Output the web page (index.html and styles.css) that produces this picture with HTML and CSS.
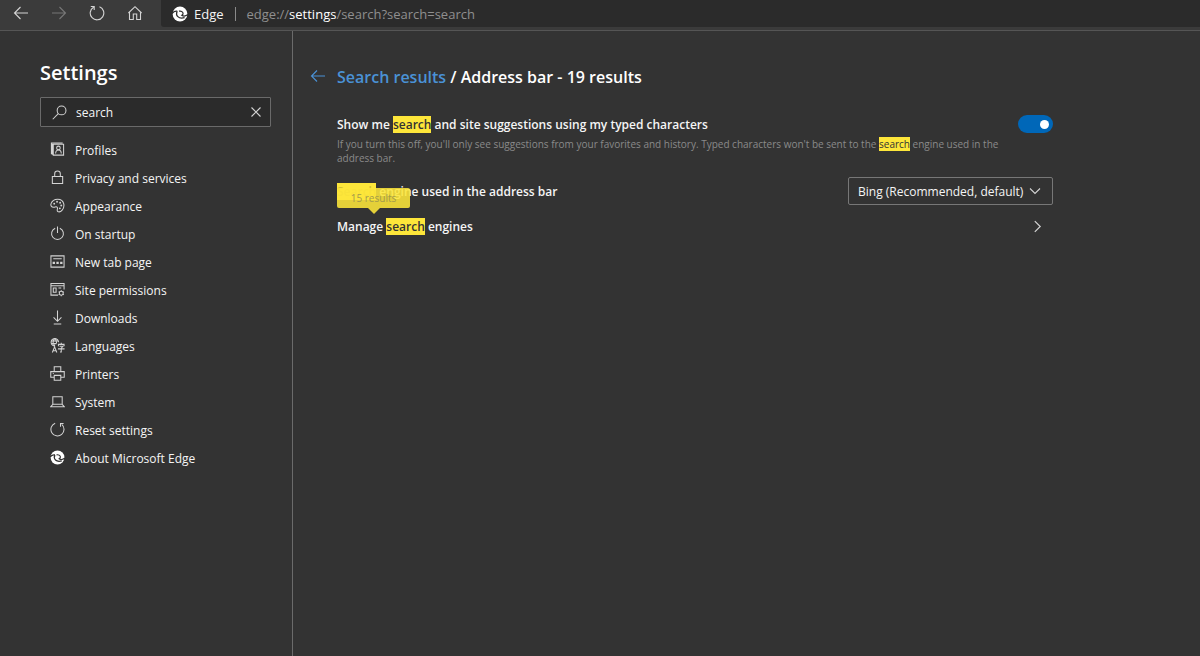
FILE: index.html
```html
<!DOCTYPE html>
<html lang="en">
<head>
<meta charset="utf-8">
<meta name="viewport" content="width=device-width, initial-scale=1">
<title>Settings</title>
<link rel="stylesheet" href="styles.css">
</head>
<body>
<svg class="defs" aria-hidden="true">
  <symbol id="edge" viewBox="0 0 16 16">
    <circle cx="8" cy="8" r="7.400" fill="#fff" stroke="none"/>
    <path d="M0 7.500C1.500 5.600 3.200 4.800 5.200 5.200" fill="none" stroke="#2e2e2e" stroke-width="1.300"/>
    <path d="M5.200 5.200C3.200 9.500 6.500 13.300 12.600 11.600" fill="none" stroke="#2e2e2e" stroke-width="1.300"/>
    <path d="M7 5.200C10.800 4.500 12.300 8 9.800 9.300C11.600 10.600 14 10 16 8.600" fill="none" stroke="#2e2e2e" stroke-width="1.200"/>
  </symbol>
</svg>
<header class="toolbar">
  <nav class="browser-nav" aria-label="Browser">
    <button class="tool" aria-label="Back"><svg viewBox="0 0 16 16"><path d="M15 8H1.500M7.500 2L1.500 8l6 6"/></svg></button>
    <button class="tool dim" aria-label="Forward"><svg viewBox="0 0 16 16"><path d="M1 8h13.500M8.500 2l6 6-6 6"/></svg></button>
    <button class="tool" aria-label="Refresh"><svg viewBox="0 0 16 16"><path d="M10.500 1.700A6.800 6.800 0 1 1 4.500 2.200M1.800 1.500h3.400v3.500"/></svg></button>
    <button class="tool" aria-label="Home"><svg viewBox="0 0 16 16"><path d="M2.500 7v7.500h3.800V9h3.400v5.500h3.800V7M1.400 8L8 1.700 14.600 8"/></svg></button>
  </nav>
  <div class="address">
    <svg class="edge-icon" aria-hidden="true"><use href="#edge"/></svg>
    <span class="app">Edge</span>
    <span class="sep"></span>
    <span class="url">edge://<b>settings</b>/search?search=search</span>
  </div>
</header>
<div class="layout">
  <aside class="sidebar">
    <h1>Settings</h1>
    <div class="search-box">
      <svg viewBox="0 0 16 16" aria-hidden="true"><circle cx="10.200" cy="5.800" r="4.700"/><path d="M6.700 9.300L.8 15.200"/></svg>
      <input type="text" value="search" aria-label="Search settings">
      <button class="clear" aria-label="Clear search"><svg viewBox="0 0 10 10"><path d="M.5.5l9 9M9.500.5l-9 9"/></svg></button>
    </div>
    <nav class="menu" aria-label="Settings">
      <a href="#profiles"><svg viewBox="0 0 16 16"><path d="M3.500 2.500h11v11.500h-11zM1.500 13V1h12M2.500 13.500V1.800"/><circle cx="9" cy="6.300" r="1.900"/><path d="M6 12.200c0-5 6-5 6 0"/></svg>Profiles</a>
      <a href="#privacy"><svg viewBox="0 0 16 16"><path d="M2.500 7h11v7.500h-11zM5 7V4a3 3 0 0 1 6 0v3"/></svg>Privacy and services</a>
      <a href="#appearance"><svg viewBox="0 0 16 16"><path d="M1.200 5.800C3.500-.2 13-.5 14.700 6.200c1 5.200-3.400 9.800-6.400 8.200-1.600-1 .2-2.700-.4-4.100-.8-1.800-2.300-.5-3.800-.5C1.500 9.900.3 8 1.200 5.800z"/><g class="solid"><circle cx="4.500" cy="6" r="1"/><circle cx="7.500" cy="4" r="1"/><circle cx="10.800" cy="5" r="1"/><circle cx="12" cy="8" r="1"/><circle cx="10.500" cy="11" r="1"/></g></svg>Appearance</a>
      <a href="#startup"><svg viewBox="0 0 16 16"><path d="M5.500 2.400a6.300 6.300 0 1 0 5 0M8 .5v7"/></svg>On startup</a>
      <a href="#newtab"><svg viewBox="0 0 16 16"><path d="M1 2h14v12H1zM3.500 5h9"/><path class="solid" d="M2.800 8.200h2.500v2.500H2.800zM6.800 8.200h2.500v2.500H6.800zM10.800 8.200h2.500v2.500h-2.500z"/></svg>New tab page</a>
      <a href="#permissions"><svg viewBox="0 0 16 16"><path d="M8.500 14H1V1.500h14V8M1 4h14M3.500 6.500h3v4.500h-3zM9 6.500h3"/><circle cx="12" cy="12" r="2.100"/><path d="M12 8.800v1.100M12 14.100v1.100M9.200 10.400l1 .6M13.900 13l.9.600M9.200 13.600l1-.6M13.900 11l.9-.6"/></svg>Site permissions</a>
      <a href="#downloads"><svg viewBox="0 0 16 16"><path d="M8 .5V12M3.800 7.800L8 12l4.200-4.200M4 15h8"/></svg>Downloads</a>
      <a href="#languages"><svg viewBox="0 0 16 16"><path d="M5.500 8.500A4 4 0 1 1 9.200 4.500M1 3.300h8M1 6h6M5.200.5c-2.400 2.500-2.400 5.500 0 8M5.200.5c1.400 1.500 1.900 3 1.800 5M2.500 15.500l2.400-6 2.400 6M3.300 13.500h3.200M12 5v1.800M9 8.800V6.800h6v2M10.200 8.900h3.600L12 10.800v4.200h-1.300M8.500 11.600h7"/></svg>Languages</a>
      <a href="#printers"><svg viewBox="0 0 16 16"><path d="M4.500 6V.8h7V6M4 12H.8V6h14.400v6H12M4.500 10h7v5.200h-7zM3 8h1"/></svg>Printers</a>
      <a href="#system"><svg viewBox="0 0 16 16"><path d="M3 3h10v8H3zM3 11L.8 13.500h14.400L13 11"/></svg>System</a>
      <a href="#reset"><svg viewBox="0 0 16 16"><path d="M5.500 1.300A7 7 0 1 0 12.500 2.500M14.500 1.700h-3.300v3.400"/></svg>Reset settings</a>
      <a href="#about"><svg><use href="#edge"/></svg>About Microsoft Edge</a>
    </nav>
  </aside>
  <main class="results">
    <div class="heading">
      <a class="back" href="#back" aria-label="Back to search results"><svg viewBox="0 0 16 16"><path d="M15 8H1.500M7 2.500L1.500 8 7 13.500"/></svg></a>
      <h2><a href="#results">Search results</a> / Address bar - 19 results</h2>
    </div>
    <section class="settings">
      <div class="row suggestions">
        <div class="copy">
          <label for="suggest">Show me <mark>search</mark> and site suggestions using my typed characters</label>
          <p>If you turn this off, you'll only see suggestions from your favorites and history. Typed characters won't be sent to the <mark>search</mark> engine used in the address bar.</p>
        </div>
        <input class="toggle" id="suggest" type="checkbox" role="switch" checked>
      </div>
      <div class="row engine">
        <label for="engine"><mark class="covered">Search</mark> engine used in the address bar<span class="bubble">15 results</span></label>
        <div class="select">
          <select id="engine"><option>Bing (Recommended, default)</option></select>
          <svg viewBox="0 0 12 12" aria-hidden="true"><path d="M1 3.500l5 5 5-5"/></svg>
        </div>
      </div>
      <a class="row manage" href="#manage"><span>Manage <mark>search</mark> engines</span><svg viewBox="0 0 12 12" aria-hidden="true"><path d="M3.500 1l5 5-5 5"/></svg></a>
    </section>
  </main>
</div>
</body>
</html>
```
FILE: styles.css
```css
* { box-sizing: border-box; }
body {
  margin: 0;
  min-height: 100vh;
  display: flex;
  flex-direction: column;
  background: #333;
  color: #f5f5f5;
  font: 12px/16px "Open Sans", "Noto Sans", sans-serif;
}
button, input, select { font: inherit; color: inherit; margin: 0; }
button { padding: 0; border: 0; background: none; }
a { color: inherit; text-decoration: none; }
svg { display: block; flex: none; fill: none; stroke: #d4d4d4; stroke-width: 1.1; }
.defs { position: absolute; width: 0; height: 0; }
.solid { fill: #d4d4d4; stroke: none; }

.toolbar {
  display: flex;
  height: 31px;
  background: #3b3b3b;
  border-bottom: 1px solid #555;
}
.browser-nav { display: flex; width: 161px; padding: 5px 0 0 13px; gap: 22px; }
.tool { width: 16px; height: 16px; }
.tool svg { width: 16px; height: 16px; }
.dim svg { stroke: #777; }
.address {
  flex: 1;
  height: 27px;
  display: flex;
  align-items: center;
  padding: 0 0 0 11px;
  background: #2b2b2b;
  border-radius: 0 0 0 3px;
  font-size: 13px;
}
.edge-icon { width: 16px; height: 16px; }
.app { margin-left: 6px; }
.sep { width: 1px; height: 14px; margin: 0 11px; background: #8a8a8a; }
.url { color: #8f8f8f; }
.url b { color: #fff; font-weight: 400; }

.layout { flex: 1; display: flex; }
.sidebar {
  width: 293px;
  padding: 28px 21px 0 40px;
  border-right: 1px solid #6b6b6b;
}
h1 { margin: 0 0 10px; font-size: 20px; line-height: 28px; font-weight: 600; color: #fff; }
.search-box {
  display: flex;
  align-items: center;
  height: 30px;
  padding: 0 9px 0 11px;
  background: #2b2b2b;
  border: 1px solid #6a6a6a;
  border-radius: 1px;
}
.search-box svg { width: 15px; height: 15px; }
.search-box input { flex: 1; min-width: 0; padding: 1px 0 0 9px; border: 0; outline: 0; background: none; }
.search-box .clear svg { width: 10px; height: 10px; }
.menu { display: flex; flex-direction: column; padding: 10px 0 0 10px; }
.menu a { display: flex; align-items: center; gap: 10px; height: 28px; }
.menu svg { width: 15px; height: 15px; margin-bottom: 3px; }

.results { flex: 1; min-width: 0; padding: 32px 20px 0 17px; }
.heading { display: flex; align-items: center; gap: 11px; }
.back svg { width: 16px; height: 16px; margin-bottom: 2px; stroke: #4a92d6; }
h2 { margin: 0; font-size: 16px; line-height: 28px; font-weight: 600; color: #fff; }
h2 a { color: #4a92d6; }
.settings { max-width: 743px; padding: 24px 0 0 27px; }
.row { display: flex; justify-content: space-between; align-items: center; }
.row label, .manage span { font-weight: 600; }
mark { color: #333; background: #fde63a; }
.suggestions { align-items: flex-start; }
.copy { max-width: 670px; }
.copy label { display: block; padding-top: 2px; }
.copy p { margin: 4px 0 0; font-size: 10px; line-height: 14px; color: #8a8a8a; }
.toggle {
  appearance: none;
  display: flex;
  justify-content: flex-end;
  align-items: center;
  width: 35px;
  height: 18px;
  padding-right: 4px;
  border-radius: 9px;
  background: #0067b8;
}
.toggle::before { content: ""; width: 9px; height: 9px; border-radius: 50%; background: #fff; }
.engine { margin-top: 12px; }
.engine label { position: relative; padding-top: 1px; }
.covered { color: #d2bf35; }
.bubble {
  position: absolute;
  left: 0;
  top: 5px;
  width: 73px;
  height: 20px;
  border-radius: 2px;
  background: #fde63ae0;
  color: #a39a4c;
  font-size: 10px;
  font-weight: 400;
  line-height: 20px;
  text-align: center;
}
.bubble::after {
  content: "";
  position: absolute;
  left: 31px;
  top: 20px;
  border: solid transparent;
  border-width: 6px 6px 0;
  border-top-color: #fde63ae0;
}
.select { display: flex; align-items: center; position: relative; }
.select select {
  appearance: none;
  width: 205px;
  height: 28px;
  padding: 1px 24px 0 9px;
  border: 1px solid #777;
  border-radius: 2px;
  background: #333;
}
.select svg { position: absolute; right: 12px; width: 12px; height: 12px; pointer-events: none; }
.manage { height: 42px; padding-right: 9px; }
.manage span { padding-top: 1px; }
.manage svg { width: 13px; height: 13px; }
```
